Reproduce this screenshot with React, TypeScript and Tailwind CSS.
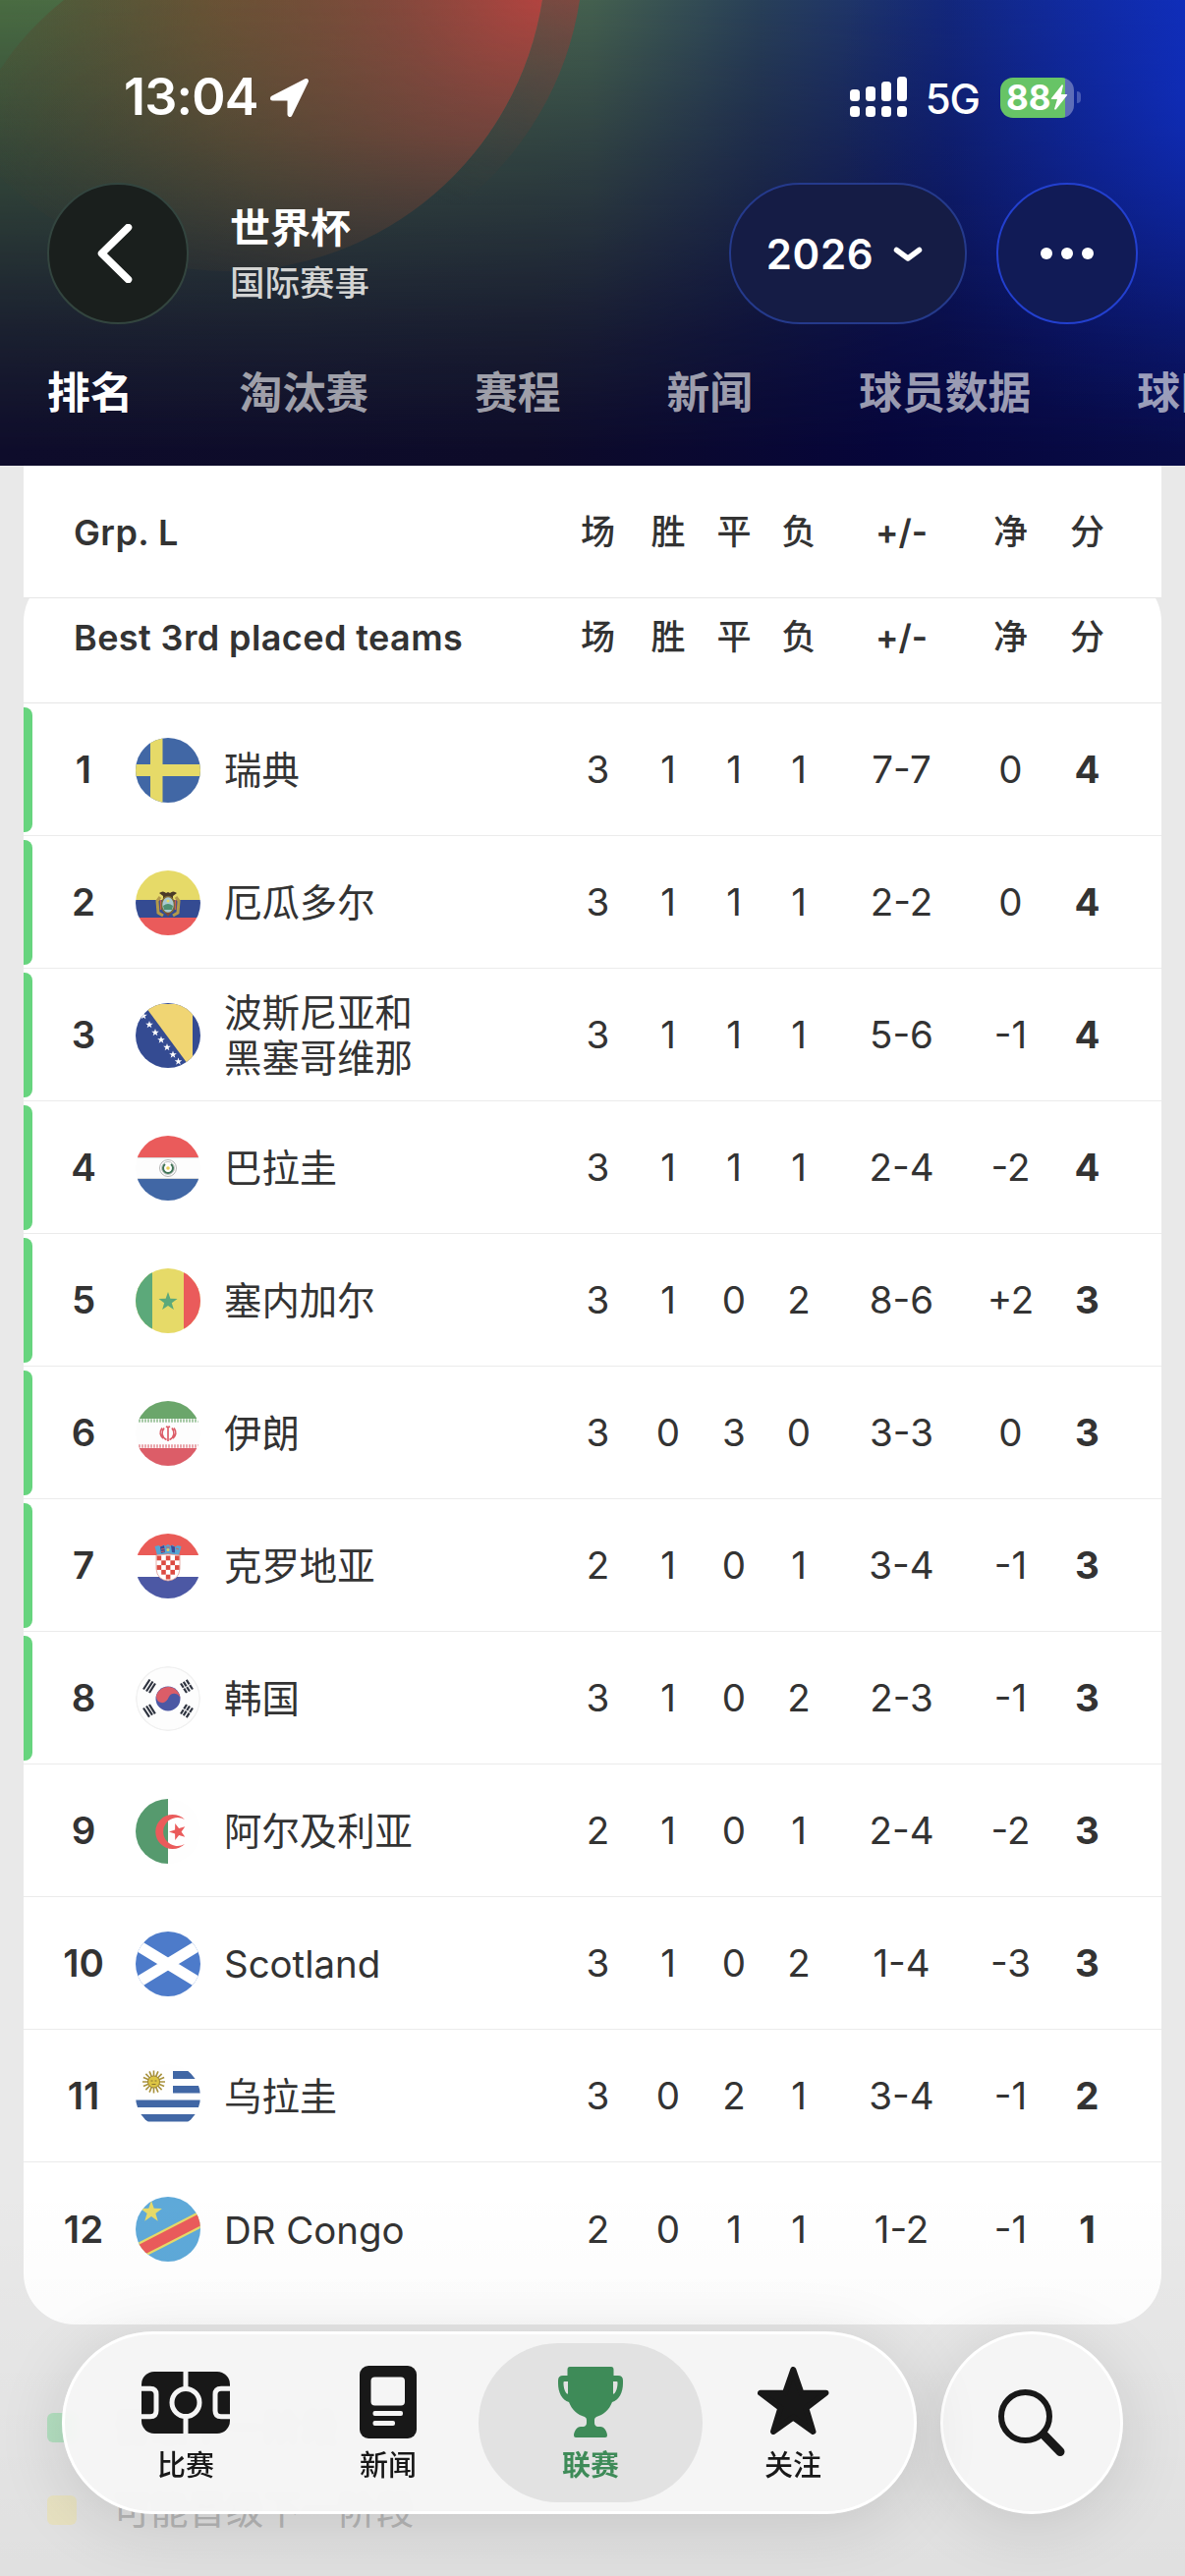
import React from 'react';
import clsx from 'clsx';

interface Team {
  rank: number;
  name: string;
  flag: string;
  stats: string[];
  points: number;
  qualified: boolean;
}

const teams: Team[] = [
  { rank: 1, name: '瑞典', flag: 'se', stats: ['3', '1', '1', '1', '7-7', '0'], points: 4, qualified: true },
  { rank: 2, name: '厄瓜多尔', flag: 'ec', stats: ['3', '1', '1', '1', '2-2', '0'], points: 4, qualified: true },
  { rank: 3, name: '波斯尼亚和\n黑塞哥维那', flag: 'ba', stats: ['3', '1', '1', '1', '5-6', '-1'], points: 4, qualified: true },
  { rank: 4, name: '巴拉圭', flag: 'py', stats: ['3', '1', '1', '1', '2-4', '-2'], points: 4, qualified: true },
  { rank: 5, name: '塞内加尔', flag: 'sn', stats: ['3', '1', '0', '2', '8-6', '+2'], points: 3, qualified: true },
  { rank: 6, name: '伊朗', flag: 'ir', stats: ['3', '0', '3', '0', '3-3', '0'], points: 3, qualified: true },
  { rank: 7, name: '克罗地亚', flag: 'hr', stats: ['2', '1', '0', '1', '3-4', '-1'], points: 3, qualified: true },
  { rank: 8, name: '韩国', flag: 'kr', stats: ['3', '1', '0', '2', '2-3', '-1'], points: 3, qualified: true },
  { rank: 9, name: '阿尔及利亚', flag: 'dz', stats: ['2', '1', '0', '1', '2-4', '-2'], points: 3, qualified: false },
  { rank: 10, name: 'Scotland', flag: 'sct', stats: ['3', '1', '0', '2', '1-4', '-3'], points: 3, qualified: false },
  { rank: 11, name: '乌拉圭', flag: 'uy', stats: ['3', '0', '2', '1', '3-4', '-1'], points: 2, qualified: false },
  { rank: 12, name: 'DR Congo', flag: 'cd', stats: ['2', '0', '1', '1', '1-2', '-1'], points: 1, qualified: false },
];

const columns = ['场', '胜', '平', '负', '+/-', '净', '分'];
const tabs = ['排名', '淘汰赛', '赛程', '新闻', '球员数据', '球队数据'];

const star = (cx: number, cy: number, r: number, rotate = 0) =>
  Array.from({ length: 10 }, (_, i) => {
    const radius = i % 2 === 0 ? r : r * 0.4;
    const angle = ((i * 36 - 90 + rotate) * Math.PI) / 180;
    return `${cx + radius * Math.cos(angle)},${cy + radius * Math.sin(angle)}`;
  }).join(' ');

const flags: Record<string, React.ReactNode> = {
  se: (
    <>
      <rect width="66" height="66" fill="#4167a5" />
      <path d="M15 0h12.500v66H15zM0 27h66v12H0z" fill="#e6da68" />
    </>
  ),
  ec: (
    <>
      <rect width="66" height="30" fill="#e6da68" />
      <rect y="30" width="66" height="18" fill="#344b92" />
      <rect y="48" width="66" height="18" fill="#ea5b5b" />
      <path d="M24 23q4-3 7 0l2-1 2 1q3-3 7 0l-4 3v4H28v-4z" fill="#4a3a28" />
      <path d="M25 27l-3 4 1 12 5 3M41 27l3 4-1 12-5 3" fill="none" stroke="#b39a4a" strokeWidth="3" />
      <path d="M25.500 30v10M40.500 30v10" stroke="#c85c50" strokeWidth="1.500" />
      <ellipse cx="33" cy="35" rx="6.500" ry="8.500" fill="#a9c9d2" stroke="#7d6a35" strokeWidth="1.500" />
      <path d="M28 36q5-4 10 0l-1 4h-8z" fill="#4f8f72" />
      <path d="M30 43h6l-3 4z" fill="#7a4b3a" />
      <circle cx="33" cy="31" r="1.500" fill="#e6da68" />
    </>
  ),
  ba: (
    <>
      <rect width="66" height="66" fill="#344b92" />
      <path d="M8 1h50v65H56z" fill="#f0d573" />
      {[[8, 13], [14, 22], [20, 30], [26, 37.500], [32, 45], [38, 52.500], [43.500, 59.500]].map(([x, y]) => (
        <polygon key={x} points={star(x, y, 4)} fill="#fff" />
      ))}
    </>
  ),
  py: (
    <>
      <rect width="66" height="66" fill="#fdfdfd" />
      <rect width="66" height="22" fill="#ea5b5b" />
      <rect y="44" width="66" height="22" fill="#4167a5" />
      <path d="M0 22.500h66M0 43.500h66" stroke="#d9d9d9" />
      <circle cx="33" cy="33" r="8.500" fill="#fff" stroke="#b5b5b5" />
      <circle cx="33" cy="33" r="6.500" fill="none" stroke="#c4c4c4" strokeWidth="1" />
      <path d="M30 29a5 5 0 1 0 6 0" fill="none" stroke="#3f7356" strokeWidth="2" />
      <circle cx="33" cy="33" r="1.800" fill="#e9cf55" />
    </>
  ),
  sn: (
    <>
      <rect width="66" height="66" fill="#e6da68" />
      <rect width="17" height="66" fill="#5ca97a" />
      <rect x="49" width="17" height="66" fill="#ea5b5b" />
      <polygon points={star(33, 34, 10)} fill="#5ca97a" />
    </>
  ),
  ir: (
    <>
      <rect width="66" height="66" fill="#fdfdfd" />
      <rect width="66" height="18" fill="#6ba66b" />
      <rect y="48" width="66" height="18" fill="#dc5d68" />
      <path d="M0 20h66" stroke="#a5c9a5" strokeWidth="3.500" strokeDasharray="2 1" />
      <path d="M0 46h66" stroke="#e9a5aa" strokeWidth="3.500" strokeDasharray="2 1" />
      <path
        d="M33 26v15M29 27.500c-3 4-3 9 2.500 12M37 27.500c3 4 3 9-2.500 12M27 27.500c-3 4-2 8 1 10.500M39 27.500c3 4 2 8-1 10.500M31 26q2 1 4 0"
        fill="none"
        stroke="#dc5d68"
        strokeWidth="1.700"
      />
    </>
  ),
  hr: (
    <>
      <rect width="66" height="66" fill="#fff" />
      <rect width="66" height="22" fill="#ea5b57" />
      <rect y="44" width="66" height="22" fill="#4c58a4" />
      <path d="M19.500 13l4-1 2 1.500 3-2 2 1 2.500-1.500 2.500 1.500 2-1 3 2 2-1.500 4 1-2.500 9q-11-3-22 0z" fill="#55a5d4" />
      <path d="M25 13.500l4-1.500 1 7-4 1zM36 12l4 1.500 0 6-3-.5z" fill="#3d4a94" />
      <path d="M26 16l3.500-.5M41 15l3 1M26 18.500l3.500-.5M31 14h4" stroke="#d2605a" strokeWidth="1.200" />
      <circle cx="33" cy="16.500" r="1.500" fill="#e0cf62" />
      <path d="M21 22q12-2 24 0v14q-1 11-12 12q-11-1-12-12z" fill="#fff" stroke="#e09a92" strokeWidth=".8" />
      <g fill="#dc4b42">
        {[0, 1, 2, 3, 4].map((row) =>
          [0, 1, 2, 3, 4].map((col) =>
            (row + col) % 2 === 0 && !(row === 4 && (col === 0 || col === 4)) ? (
              <rect key={`${row}${col}`} x={21.600 + col * 4.600} y={22.500 + row * 4.800} width="4.600" height="4.800" />
            ) : null,
          ),
        )}
      </g>
    </>
  ),
  kr: (
    <>
      <circle cx="33" cy="33" r="32.300" fill="#fdfdfd" stroke="#f0f0f0" strokeWidth="1.500" />
      <circle cx="33" cy="33" r="12.500" fill="#4c58a4" />
      <path d="M21 30A12.500 12.500 0 0 1 45.500 33A6.200 6.200 0 0 0 34 31Q31 38 26 37Q21 36 21 30Z" fill="#dc5d68" />
      <g stroke="#2f3440" strokeWidth="2.200">
        <path d="M8 23.500l6.500-10M11 25.500l6.500-10M14 27l6-9.500" />
        <path d="M58 23.500l-6.500-10M55 25.500l-6.500-10M52 27l-6-9.500" strokeDasharray="5.200 1" />
        <path d="M8 42.500l6.500 10M11 40.500l6.500 10M14 39l6 9.500" strokeDasharray="11 1 5 1" />
        <path d="M58 42.500l-6.500 10M55 40.500l-6.500 10M52 39l-6 9.500" strokeDasharray="5.200 1" />
      </g>
    </>
  ),
  dz: (
    <>
      <rect width="66" height="66" fill="#fefefe" />
      <rect width="33" height="66" fill="#569a6e" />
      <path d="M50 21A17.500 17.500 0 1 0 50 46A14.500 14.500 0 1 1 50 21Z" fill="#ea5b5b" />
      <polygon points={star(43, 33.500, 9, -18)} fill="#ea5b5b" />
    </>
  ),
  sct: (
    <>
      <rect width="66" height="66" fill="#4d7bca" />
      <path d="M-8 8L74 58M74 8L-8 58" stroke="#fff" strokeWidth="11.500" />
    </>
  ),
  uy: (
    <>
      <rect width="66" height="66" fill="#fefefe" />
      <path d="M38 7h28v8H38zM38 22h28v7.500H38zM0 36.500h66V44H0zM0 51h66v7.500H0z" fill="#4167a5" />
      <g stroke="#a8923c" strokeWidth="1.600">
        {Array.from({ length: 16 }, (_, i) => {
          const a = (i * Math.PI) / 8;
          return (
            <path key={i} d={`M${18.500 + 5 * Math.cos(a)} ${18 + 5 * Math.sin(a)}L${18.500 + 11.500 * Math.cos(a)} ${18 + 11.500 * Math.sin(a)}`} />
          );
        })}
      </g>
      <circle cx="18.500" cy="18" r="6" fill="#dcc544" stroke="#9a8435" />
      <path d="M15.500 17h2M19.500 17h2M16.500 20.500h4" stroke="#8a7530" />
    </>
  ),
  cd: (
    <>
      <rect width="66" height="66" fill="#5ea9d9" />
      <path d="M-6 60L72 20" stroke="#e6da68" strokeWidth="16" />
      <path d="M-6 60L72 20" stroke="#ea5b5b" strokeWidth="11.500" />
      <polygon points={star(16, 15.500, 11.500)} fill="#e6da68" />
    </>
  ),
};

const Flag: React.FC<{ code: string }> = ({ code }) => (
  <svg viewBox="0 0 66 66" className="w-[66px] h-[66px] rounded-full shrink-0">
    {flags[code]}
  </svg>
);

const HeaderArt: React.FC = () => (
  <svg viewBox="0 0 1206 474" className="absolute inset-0 w-full h-full" preserveAspectRatio="none">
    <defs>
      <linearGradient id="sky" x1="0" x2="1">
        <stop offset="0" stopColor="#4a6c42" />
        <stop offset=".25" stopColor="#4c6a4a" />
        <stop offset=".5" stopColor="#44604f" />
        <stop offset=".64" stopColor="#294058" />
        <stop offset=".8" stopColor="#152a7a" />
        <stop offset="1" stopColor="#1234c8" />
      </linearGradient>
      <linearGradient id="night" x1="0" x2="1">
        <stop offset="0" stopColor="#0e0c2b" />
        <stop offset=".45" stopColor="#0d0b29" />
        <stop offset=".75" stopColor="#06053a" />
        <stop offset="1" stopColor="#080c48" />
      </linearGradient>
      <linearGradient id="fade" x1="0" y1="0" x2="0" y2="1">
        <stop offset="0" stopColor="#fff" stopOpacity="0" />
        <stop offset=".33" stopColor="#fff" stopOpacity=".38" />
        <stop offset=".55" stopColor="#fff" stopOpacity=".62" />
        <stop offset=".72" stopColor="#fff" stopOpacity=".8" />
        <stop offset=".97" stopColor="#fff" />
      </linearGradient>
      <mask id="fadeMask">
        <rect width="1206" height="474" fill="url(#fade)" />
      </mask>
      <linearGradient id="discFade" gradientUnits="userSpaceOnUse" x1="300" y1="0" x2="300" y2="276">
        <stop offset="0" stopColor="#fff" />
        <stop offset=".5" stopColor="#fff" stopOpacity=".85" />
        <stop offset="1" stopColor="#fff" stopOpacity=".35" />
      </linearGradient>
      <mask id="discMask">
        <rect width="700" height="300" fill="url(#discFade)" />
      </mask>
      <radialGradient id="blue" gradientUnits="userSpaceOnUse" cx="0" cy="0" r="1" gradientTransform="translate(1270 100) scale(420 360)">
        <stop offset="0" stopColor="#1030c8" stopOpacity=".75" />
        <stop offset=".5" stopColor="#0d249c" stopOpacity=".4" />
        <stop offset="1" stopColor="#0a1870" stopOpacity="0" />
      </radialGradient>
      <radialGradient id="red" gradientUnits="userSpaceOnUse" cx="560" cy="-10" r="600">
        <stop offset="0" stopColor="#bd413f" stopOpacity=".95" />
        <stop offset=".25" stopColor="#94423a" stopOpacity=".78" />
        <stop offset=".6" stopColor="#6c482e" stopOpacity=".5" />
        <stop offset="1" stopColor="#403a28" stopOpacity="0" />
      </radialGradient>
      <linearGradient id="ring" gradientUnits="userSpaceOnUse" x1="600" y1="0" x2="480" y2="220">
        <stop offset="0" stopColor="#94403c" stopOpacity=".75" />
        <stop offset="1" stopColor="#4a3c34" stopOpacity="0" />
      </linearGradient>
      <radialGradient id="amber" gradientUnits="userSpaceOnUse" cx="230" cy="0" r="340">
        <stop offset="0" stopColor="#7a5030" stopOpacity=".5" />
        <stop offset="1" stopColor="#54402e" stopOpacity="0" />
      </radialGradient>
    </defs>
    <rect width="1206" height="474" fill="url(#sky)" />
    <rect width="1206" height="474" fill="url(#night)" mask="url(#fadeMask)" />
    <rect width="1206" height="474" fill="url(#blue)" />
    <g mask="url(#discMask)">
      <path d="M65 0Q25 32 0 71V180A326 326 0 0 0 230 276A326 326 0 0 0 552 0Z" fill="url(#amber)" />
      <path d="M590 0A327 327 0 0 1 470 207L424 213A326 326 0 0 0 552 0Z" fill="url(#ring)" />
      <path d="M65 0Q25 32 0 71V180A326 326 0 0 0 230 276A326 326 0 0 0 552 0Z" fill="url(#red)" />
    </g>
  </svg>
);

const StatusBar: React.FC = () => (
  <div className="h-[186px] pt-[12px] pl-[126px] pr-[106px] flex items-center justify-between text-white">
    <div className="flex items-center">
      <span className="text-[52px] leading-none font-semibold tracking-[-0.800px]">13:04</span>
      <svg viewBox="0 0 39 39" className="w-[39px] h-[39px] ml-[12px]" fill="#fff" stroke="#fff" strokeWidth="5" strokeLinejoin="round">
        <path d="M36.500 2.500L20 36.500V20H2.500Z" />
      </svg>
    </div>
    <div className="flex items-center">
      <svg viewBox="0 0 58 42" className="w-[58px] h-[42px]" fill="#fff">
        {[13, 10, 5, 0].map((y, i) => (
          <React.Fragment key={i}>
            <rect x={i * 16} y={y} width="10" height={25 - y} rx="3.500" />
            <rect x={i * 16} y="30" width="10" height="11" rx="3.500" />
          </React.Fragment>
        ))}
      </svg>
      <span className="ml-[19px] mt-[4px] text-[42px] leading-none font-medium tracking-[-1px]">5G</span>
      <div className="ml-[21px] w-[75px] h-[41px] rounded-[13px] bg-linear-to-r from-[#67c466] from-88% to-[#5d6db8] to-88% flex items-center">
        <span className="ml-[6px] text-[35px] leading-[41px] font-bold">88</span>
        <svg viewBox="0 0 18 26" className="-ml-px w-[18px] h-[26px] shrink-0" fill="#fff">
          <path d="M12 0L1 14q-1 1 1 1h5L4 25q1 1 2 0L17 11q1-1-1-1h-5l2-9z" />
        </svg>
      </div>
      <div className="ml-[3px] w-[4px] h-[12px] rounded-r-full bg-[#4659b4]" />
    </div>
  </div>
);

const StatCells: React.FC<{ values: string[]; header?: boolean }> = ({ values, header }) => (
  <div className="grid grid-cols-[71px_72px_62px_70px_139px_83px_73px] mr-[39px] text-center shrink-0">
    {values.map((value, i) => (
      <span key={i} className={clsx(!header && i === 6 && 'font-bold', header && i === 4 && 'font-semibold')}>
        {value}
      </span>
    ))}
  </div>
);

const TableHeader: React.FC<{ title: string }> = ({ title }) => (
  <div className="h-[135px] pt-px border-b border-[#e6e6e6] flex items-center text-[35px] font-medium">
    <span className="flex-1 pl-[51px] text-[36px] font-semibold tracking-[0.400px]">{title}</span>
    <StatCells values={columns} header />
  </div>
);

const TeamRow: React.FC<{ team: Team; last: boolean }> = ({ team, last }) => (
  <div className={clsx('h-[135px] pt-px flex items-center text-[38.500px]', !last && 'border-b border-[#ebebeb]')}>
    <div className={clsx('w-[9px] h-[127px] rounded-r-[8px]', team.qualified && 'bg-[#67d47e]')} />
    <span className="w-[104px] mt-px text-center font-semibold">{team.rank}</span>
    <div className="ml-px">
      <Flag code={team.flag} />
    </div>
    <span className="flex-1 ml-[24px] mt-px whitespace-pre-line leading-[46px] text-[38.400px]">{team.name}</span>
    <div className="mt-px">
      <StatCells values={[...team.stats, String(team.points)]} />
    </div>
  </div>
);

const navItems = [
  {
    label: '比赛',
    icon: (
      <svg viewBox="0 0 90 63" className="w-[90px] h-[63px]">
        <clipPath id="pitch">
          <rect width="90" height="63" rx="13" />
        </clipPath>
        <g clipPath="url(#pitch)">
          <rect width="90" height="63" fill="#181818" />
          <g fill="none" stroke="#f5f5f5" strokeWidth="5">
            <path d="M45 0v17M45 46v17" />
            <circle cx="45" cy="31.500" r="14" />
            <path d="M-4 17.300H9q6 0 6 6v16.500q0 6-6 6H-4M94 17.300H81q-6 0-6 6v16.500q0 6 6 6H94" />
          </g>
        </g>
      </svg>
    ),
  },
  {
    label: '新闻',
    icon: (
      <svg viewBox="0 0 58 74" className="w-[58px] h-[74px]">
        <rect width="58" height="74" rx="9" fill="#181818" />
        <g fill="#f5f5f5">
          <rect x="11.500" y="11.500" width="34.500" height="29" rx="4" />
          <rect x="13.500" y="46" width="30.500" height="5" rx="2" />
          <rect x="13.500" y="56" width="22.500" height="5" rx="2" />
        </g>
      </svg>
    ),
  },
  {
    label: '联赛',
    active: true,
    icon: (
      <svg viewBox="0 0 66 72" className="w-[66px] h-[72px]" fill="#3e8b58">
        <path
          fillRule="evenodd"
          d="M12 0H54Q56.500 0 56.500 3V9H61Q66 9 66 14V17C66 26 62 34 55 36C52 44 46 49 39 51Q37 52 37 54V57Q37 60 40 61H43C47 61 50 66 50 70Q50 72 48 72H18Q16 72 16 70C16 66 19 61 23 61H26Q29 60 29 57V54Q29 52 27 51C20 49 14 44 11 36C4 34 0 26 0 17V14Q0 9 5 9H9.500V3Q9.500 0 12 0ZM6.500 15H10V27Q10 28 9 27.500C7 26 5.500 21 5.500 17V16Q5.500 15 6.500 15ZM59.500 15H56V27Q56 28 57 27.500C59 26 60.500 21 60.500 17V16Q60.500 15 59.500 15Z"
        />
      </svg>
    ),
  },
  {
    label: '关注',
    icon: (
      <svg viewBox="0 0 73 69" className="w-[73px] h-[69px] -mt-[3px]" fill="#181818" stroke="#181818" strokeWidth="6" strokeLinejoin="round">
        <path d="M36.300 3L44.500 26.700H69.500L49.300 42L56.500 66L36.300 51.500L16 66L23.300 42L3 26.700H28Z" />
      </svg>
    ),
  },
];

const BottomNav: React.FC = () => (
  <div className="absolute left-[63px] top-[2373px] flex gap-[24px]">
    <div className="w-[870px] h-[186px] rounded-full border-[3px] border-white bg-[#f5f5f5]/95 backdrop-blur-[3px] shadow-[0_12px_70px_rgba(0,0,0,0.12)] flex items-center justify-center">
      {navItems.map((item) => (
        <div
          key={item.label}
          className={clsx(
            'h-[162px] flex flex-col items-center shrink-0 rounded-full text-[29px] leading-none',
            item.active ? 'w-[228px] -mx-[11px] bg-[#e2e2e2] text-[#3e8b58] font-bold' : 'w-[206px] text-[#181818] font-medium',
          )}
        >
          <div className="h-[74px] mt-[23px] flex items-center">{item.icon}</div>
          <span className="mt-[13px]">{item.label}</span>
        </div>
      ))}
    </div>
    <div className="w-[186px] h-[186px] rounded-full border-[3px] border-white bg-[#f5f5f5] shadow-[0_12px_70px_rgba(0,0,0,0.12)] flex items-center justify-center">
      <svg viewBox="0 0 68 68" className="w-[68px] h-[68px]" fill="none" stroke="#181818">
        <circle cx="27.500" cy="27.500" r="24.500" strokeWidth="6" />
        <path d="M46 46L63 63.500" strokeWidth="9" strokeLinecap="round" />
      </svg>
    </div>
  </div>
);

const App: React.FC = () => {
  return (
    <div className="relative w-[1206px] h-[2622px] overflow-hidden bg-[#e9e9e9] text-[#333] font-['Inter','Noto_Sans_CJK_SC',sans-serif]">
      <header className="relative h-[474px] overflow-hidden bg-[#0c0b28]">
        <HeaderArt />
        <div className="relative">
          <StatusBar />

          <div className="h-[144px] px-[48px] flex items-center text-white">
            <div className="w-[144px] h-[144px] rounded-full border-2 border-[#33453f] bg-[#1a1f1d] flex items-center justify-center">
              <svg viewBox="0 0 36 60" className="w-[36px] h-[60px] -ml-[7px]" fill="none" stroke="#fff" strokeWidth="7.500" strokeLinecap="round" strokeLinejoin="round">
                <path d="M31.500 3.500L4.500 30L31.500 56.500" />
              </svg>
            </div>
            <div className="ml-[42px] pt-[9px] flex-1 flex flex-col">
              <span className="text-[41px] leading-[53px] font-bold">世界杯</span>
              <span className="text-[35.500px] leading-[60px] text-[#d3d4d3] font-medium">国际赛事</span>
            </div>
            <div className="w-[242px] h-[144px] rounded-full border-2 border-[#253a8c] bg-[#151c45] flex items-center justify-center gap-[20px]">
              <span className="-ml-[7px] text-[42px] font-semibold tracking-[0.600px]">2026</span>
              <svg viewBox="0 0 30 16" className="w-[30px] h-[16px] mt-[2px]" fill="none" stroke="#fff" strokeWidth="5.500" strokeLinecap="round" strokeLinejoin="round">
                <path d="M3.500 3.500L15 12L26.500 3.500" />
              </svg>
            </div>
            <div className="ml-[30px] w-[144px] h-[144px] rounded-full border-2 border-[#2340cf] bg-[#111b56] flex items-center justify-center gap-[9px]">
              <div className="w-[12px] h-[12px] rounded-full bg-white" />
              <div className="w-[12px] h-[12px] rounded-full bg-white" />
              <div className="w-[12px] h-[12px] rounded-full bg-white" />
            </div>
          </div>

          <nav className="h-[144px] pb-[2px] pl-[48px] flex items-center gap-[108px] text-[43.800px] font-bold whitespace-nowrap">
            {tabs.map((tab, i) => (
              <span key={tab} className={i === 0 ? 'text-white' : 'text-white/60'}>
                {tab}
              </span>
            ))}
          </nav>
        </div>
      </header>

      <main className="px-[24px]">
        <div className="relative z-10 bg-white">
          <TableHeader title="Grp. L" />
        </div>
        <section className="-mt-[28px] pb-[30px] bg-white rounded-[52px] overflow-hidden">
          <TableHeader title="Best 3rd placed teams" />
          {teams.map((team, i) => (
            <TeamRow key={team.rank} team={team} last={i === teams.length - 1} />
          ))}
        </section>

        {/* Legend */}
        <div className="pt-[82px] pl-[24px] flex flex-col gap-[38px] text-[38.300px] leading-[46px] text-[#bcbcbc]">
          <div className="flex items-center gap-[37px]">
            <div className="w-[30px] h-[30px] rounded-[6px] bg-[#b8e4c5]" />
            <span>晋级下一阶段</span>
          </div>
          <div className="flex items-center gap-[37px]">
            <div className="w-[30px] h-[30px] rounded-[6px] bg-[#efe9c8]" />
            <span>可能晋级下一阶段</span>
          </div>
        </div>
      </main>

      <div className="absolute inset-x-0 bottom-0 h-[400px] bg-linear-to-b from-black/0 to-black/4" />
      <BottomNav />
    </div>
  );
};

export default App;
